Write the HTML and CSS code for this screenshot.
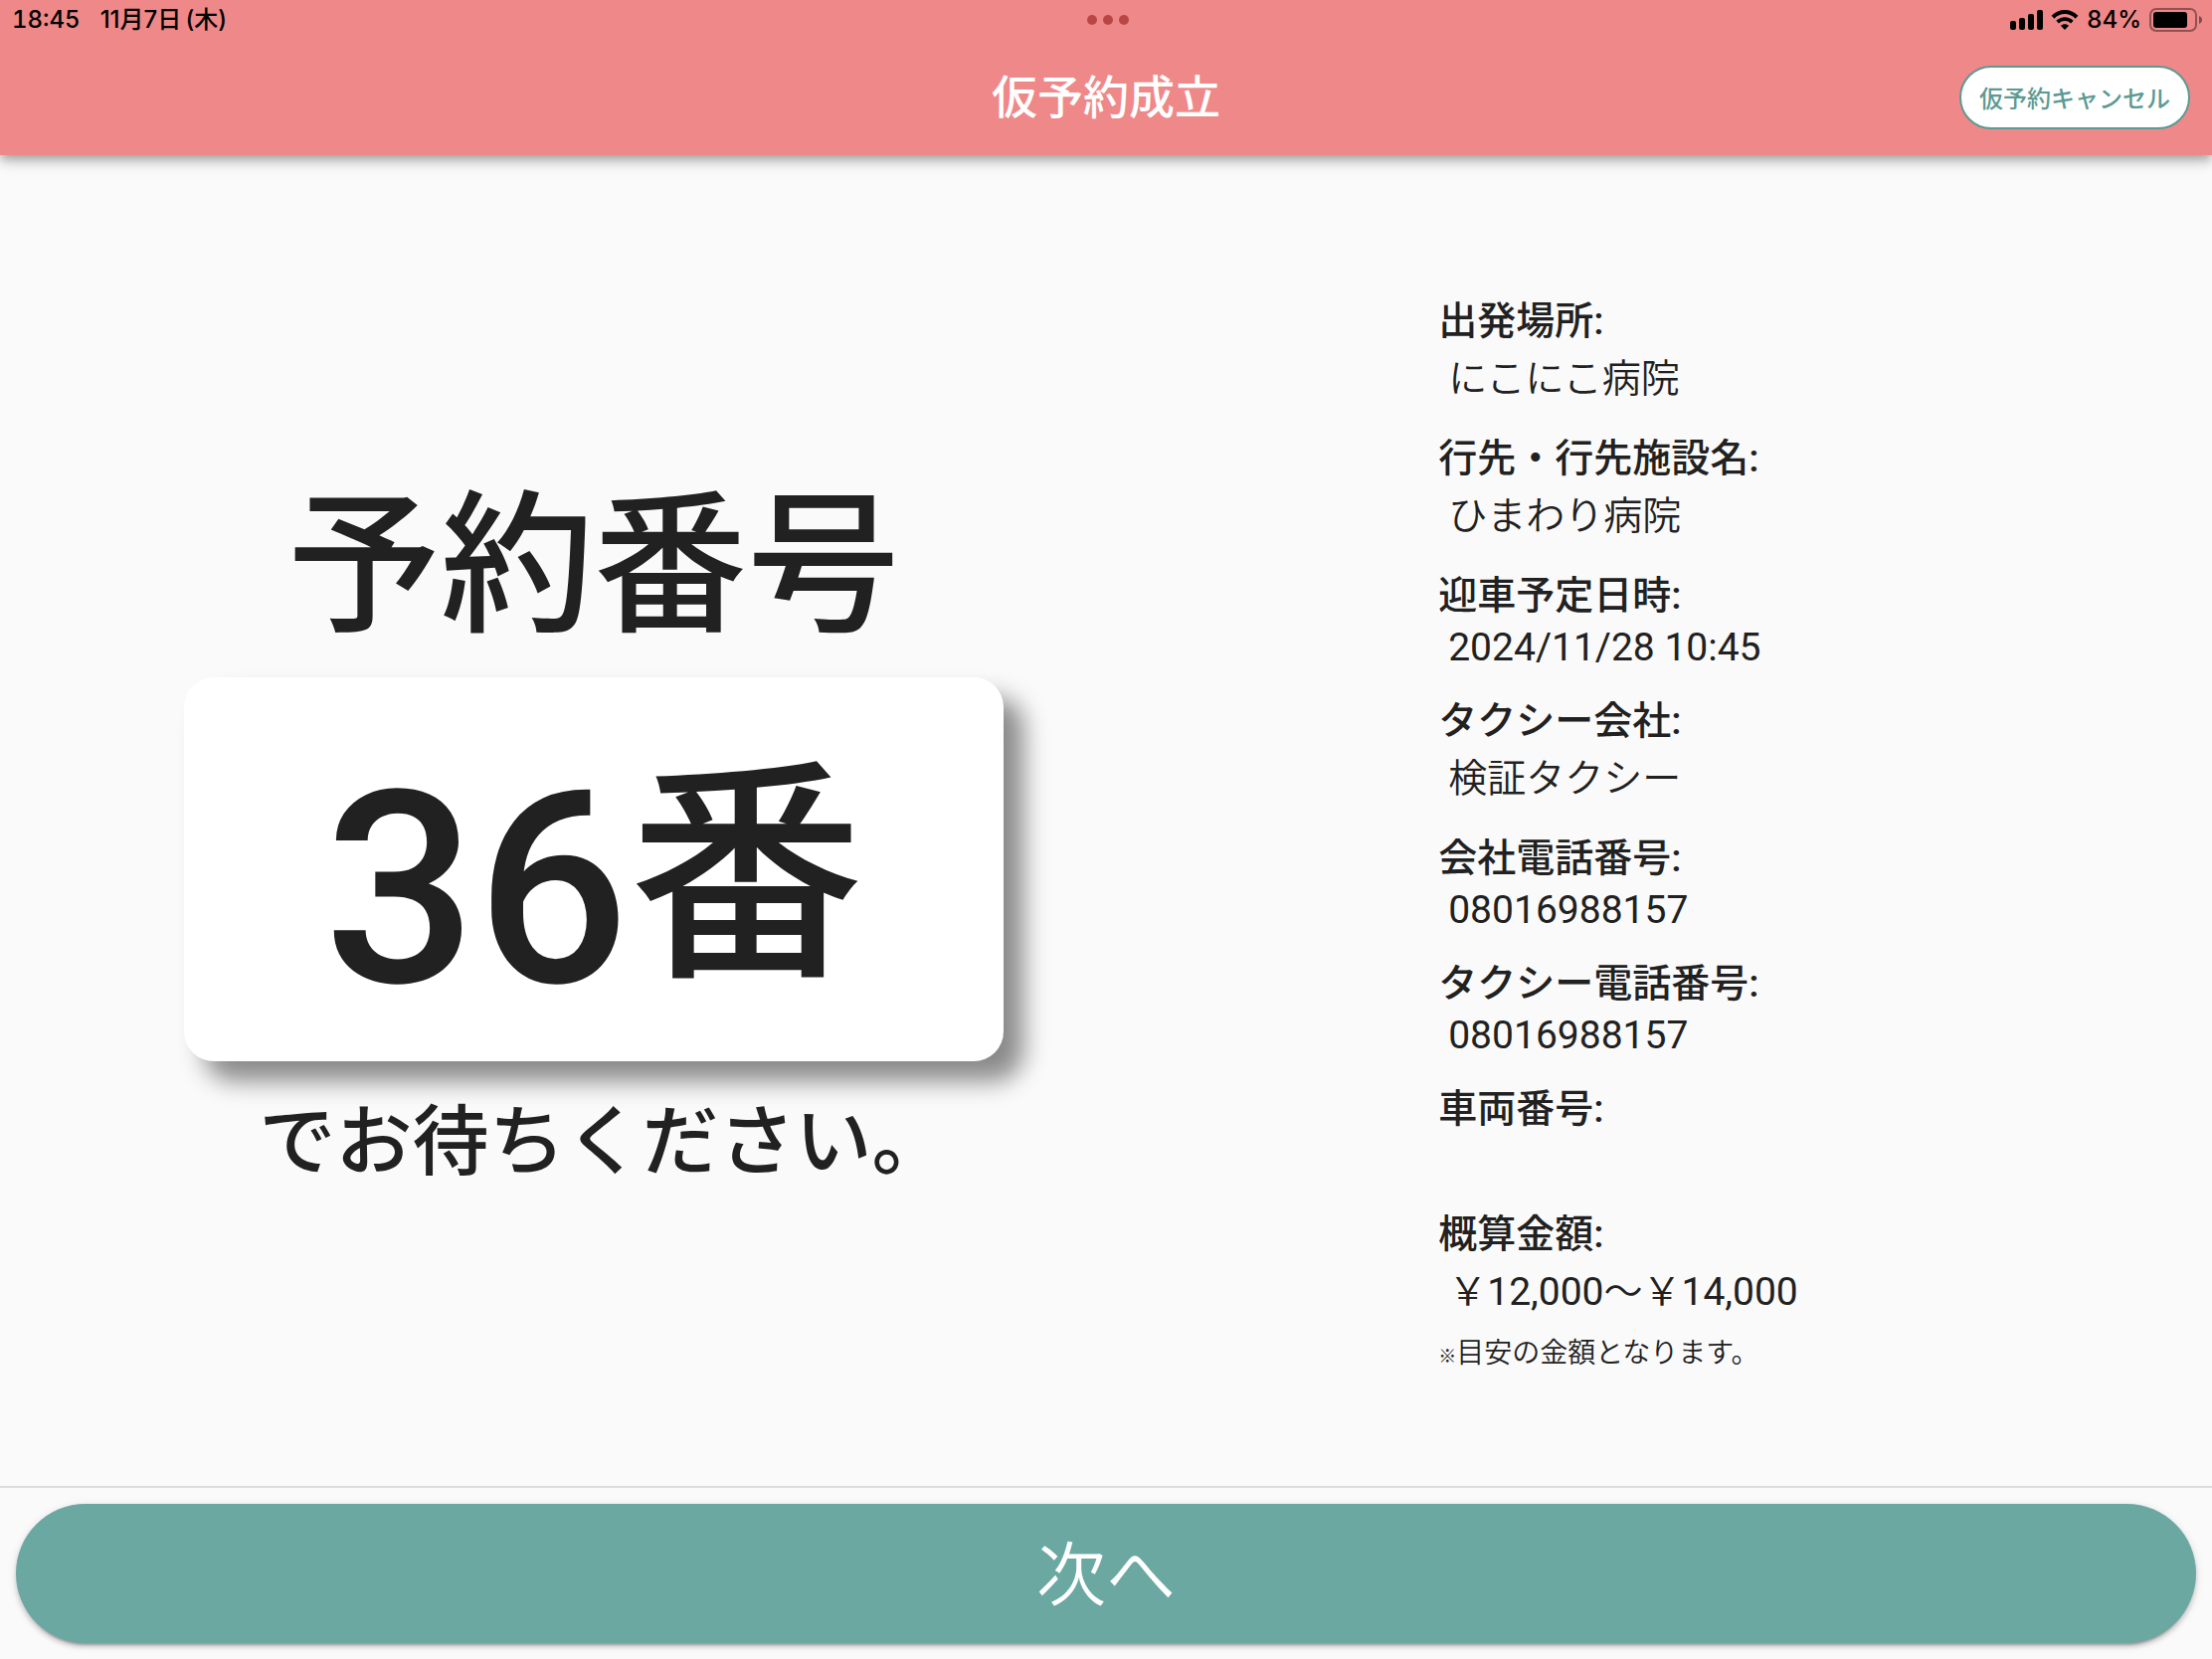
FILE: index.html
```html
<!DOCTYPE html>
<html lang="ja">
<head>
<meta charset="utf-8">
<meta name="viewport" content="width=device-width, initial-scale=1">
<title>仮予約成立</title>
<link rel="stylesheet" href="styles.css">
</head>
<body>
<header class="header">
  <div class="status">
    <div class="status-left"><span class="time">18:45</span><span>11月7日&#8201;(木)</span></div>
    <div class="dots"><i></i><i></i><i></i></div>
    <div class="status-right">
      <svg class="signal" width="33" height="20" viewBox="0 0 33 20" aria-hidden="true"><rect x="0" y="11" width="6" height="9" rx="2"/><rect x="9" y="8" width="6" height="12" rx="2"/><rect x="18" y="4" width="6" height="16" rx="2"/><rect x="27" y="0" width="6" height="20" rx="2"/></svg>
      <svg class="wifi" width="28" height="20" viewBox="0 0 28 20" aria-hidden="true"><path d="M2 7.2C9 .4 19 .4 26 7.2" fill="none" stroke="#000" stroke-width="4"/><path d="M6.6 12.2c4.3-4 10.500-4 14.800 0" fill="none" stroke="#000" stroke-width="3.800"/><path d="M14 20l-4.200-4.200c2.400-2.200 6-2.200 8.400 0z"/></svg>
      <span class="percent">84%</span>
      <svg class="battery" width="54" height="24" viewBox="0 0 54 24" aria-hidden="true"><rect x="1" y="1" width="46" height="22" rx="6" fill="none" stroke="#000" stroke-opacity=".4" stroke-width="2"/><rect x="4" y="4" width="34" height="16" rx="3"/><path d="M50 8c2 .8 3 2.200 3 4s-1 3.200-3 4z" fill-opacity=".45"/></svg>
    </div>
  </div>
  <div class="bar">
    <h1 class="title">仮予約成立</h1>
    <button class="cancel" type="button">仮予約キャンセル</button>
  </div>
</header>
<main class="content">
  <section class="ticket">
    <h2 class="ticket-title">予約番号</h2>
    <p class="ticket-number">36<span class="counter">番</span></p>
    <p class="ticket-note">でお待ちください。</p>
  </section>
  <section class="details">
    <dl class="list">
      <div class="item"><dt>出発場所:</dt><dd class="ja">にこにこ病院</dd></div>
      <div class="item"><dt>行先・行先施設名:</dt><dd class="ja">ひまわり病院</dd></div>
      <div class="item"><dt>迎車予定日時:</dt><dd>2024/11/28 10:45</dd></div>
      <div class="item"><dt>タクシー会社:</dt><dd class="ja">検証タクシー</dd></div>
      <div class="item"><dt>会社電話番号:</dt><dd>08016988157</dd></div>
      <div class="item"><dt>タクシー電話番号:</dt><dd>08016988157</dd></div>
      <div class="item"><dt>車両番号:</dt><dd></dd></div>
      <div class="item"><dt>概算金額:</dt><dd class="ja">￥<span class="num">12,000</span>～￥<span class="num">14,000</span></dd></div>
    </dl>
    <p class="remark"><span class="asterisk">※</span>目安の金額となります。</p>
  </section>
</main>
<footer class="footer">
  <button class="next" type="button">次へ</button>
</footer>
</body>
</html>
```
FILE: styles.css
```css
* { box-sizing: border-box; }
body {
  margin: 0;
  min-height: 100vh;
  display: flex;
  flex-direction: column;
  background: #fafafa;
  color: #212121;
  font-family: Roboto, "Noto Sans CJK JP", sans-serif;
}
h1, h2, p, dl, dd { margin: 0; }
button { font-family: inherit; margin: 0; padding: 0; cursor: pointer; }

.header {
  background: #ef8888;
  box-shadow: 0 4px 8px -2px rgba(0,0,0,.2), 0 8px 10px rgba(0,0,0,.14), 0 2px 20px rgba(0,0,0,.12);
}
.status {
  display: grid;
  grid-template-columns: 1fr auto 1fr;
  align-items: center;
  height: 40px;
  padding: 0 9px 0 12px;
  color: #000;
  font: 500 24px/40px Inter, "Noto Sans CJK JP", sans-serif;
}
.status-left { display: flex; gap: 20px; }
.time { font-variant-numeric: tabular-nums; }
.dots { display: flex; gap: 6px; }
.dots i { width: 10px; height: 10px; border-radius: 50%; background: #b94646; }
.status-right { display: flex; justify-content: flex-end; align-items: center; gap: 8px; }

.bar {
  display: grid;
  grid-template-columns: 1fr auto 1fr;
  align-items: center;
  height: 116px;
  padding: 0 22px;
}
.title { grid-column: 2; color: #fff; font-size: 46px; font-weight: 500; line-height: 68px; }
.cancel {
  justify-self: end;
  width: 232px;
  height: 64px;
  padding-bottom: 2px;
  border: 2px solid #5c9a93;
  border-radius: 32px;
  background: #fff;
  color: #5c9a93;
  font-size: 24px;
  font-weight: 500;
}

.content {
  flex: 1;
  display: grid;
  grid-template-columns: 1fr 1fr;
  align-items: center;
  justify-items: center;
  padding: 0 82px;
}
.ticket { width: 80%; text-align: center; font-weight: 500; }
.ticket-title { padding-top: 18px; font-size: 154px; font-weight: 500; line-height: 220px; }
.ticket-number {
  height: 386px;
  border-radius: 30px;
  background: #fff;
  box-shadow: 20px 20px 24px rgba(0,0,0,.45);
  font-size: 270px;
  line-height: 428px;
}
.counter { font-size: 236px; line-height: 1; vertical-align: 24px; }
.ticket-note { padding: 24px 0 0 20px; font-size: 77px; line-height: 116px; }

.details { padding-top: 28px; }
.item { padding-bottom: 22px; font-size: 39px; }
.item dt { font-weight: 500; line-height: 58px; }
.item dd { min-height: 46px; padding-left: 10px; line-height: 46px; }
.item .ja { line-height: 58px; font-weight: 350; }
.item .num { font-weight: 400; }
.item:last-child { padding-bottom: 12px; }
.remark { font-size: 28px; font-weight: 350; line-height: 42px; }
.asterisk { font-size: 18px; font-weight: 700; }

.footer { padding: 16px; border-top: 2px solid #dcdcdc; }
.next {
  display: block;
  width: 100%;
  height: 140px;
  padding-bottom: 8px;
  border: 0;
  border-radius: 70px;
  background: #6aa8a1;
  box-shadow: 0 6px 2px -4px rgba(0,0,0,.2), 0 4px 4px rgba(0,0,0,.14), 0 2px 10px rgba(0,0,0,.12);
  color: #fff;
  font-size: 70px;
  font-weight: 350;
}
```
